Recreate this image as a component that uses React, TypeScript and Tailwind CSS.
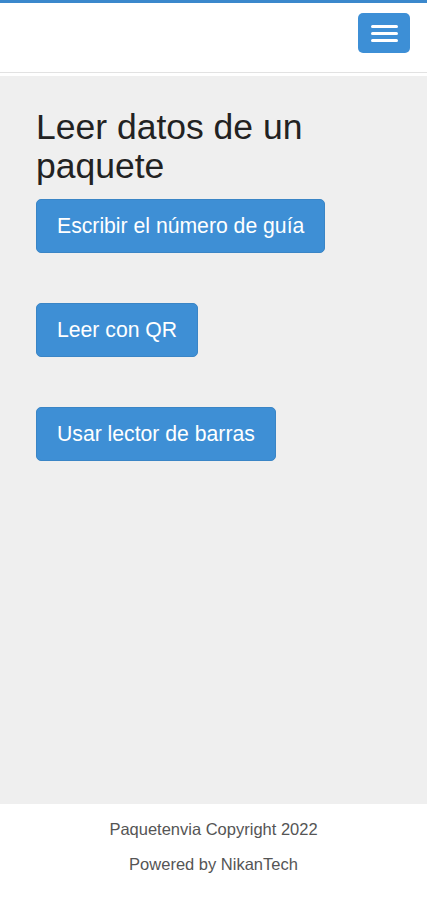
const actions = ["Escribir el número de guía", "Leer con QR", "Usar lector de barras"];

function Navbar() {
  return (
    <div className="border-t-[3px] border-[#3b88cc] bg-white">
      <div className="flex h-[70px] items-start justify-end border-b border-[#e2e2e2] pr-[17px] pt-[10px]">
        <button className="flex h-[40px] w-[52px] flex-col items-center justify-center gap-[4px] rounded-[5px] bg-[#3d8fd6]">
          <span className="block h-[3px] w-[27px] rounded-sm bg-white" />
          <span className="block h-[3px] w-[27px] rounded-sm bg-white" />
          <span className="block h-[3px] w-[27px] rounded-sm bg-white" />
        </button>
      </div>
      <div className="h-[3px] bg-white" />
    </div>
  );
}

export default function App() {
  return (
    <div
      className="flex h-[900px] flex-col bg-white"
      style={{ fontFamily: '"Liberation Sans", Arial, sans-serif' }}
    >
      <Navbar />
      <main className="flex-1 bg-[#efefef] px-[36px] pt-[32px]">
        <h1 className="text-[35.5px] leading-[38.5px] text-[#222]">
          Leer datos de un paquete
        </h1>
        <div className="mt-[14px] flex flex-col items-start gap-[50px]">
          {actions.map((label) => (
            <button
              key={label}
              className="flex h-[54px] items-center rounded-[5px] border border-[#3a85c6] bg-[#3e8fd5] px-[20px] text-[21.2px] text-white"
            >
              {label}
            </button>
          ))}
        </div>
      </main>
      <footer className="flex h-[96px] flex-col items-center gap-[11px] pt-[13px] text-[16.5px] leading-[24px] text-[#555]">
        <p>Paquetenvia Copyright 2022</p>
        <p>Powered by NikanTech</p>
      </footer>
    </div>
  );
}
